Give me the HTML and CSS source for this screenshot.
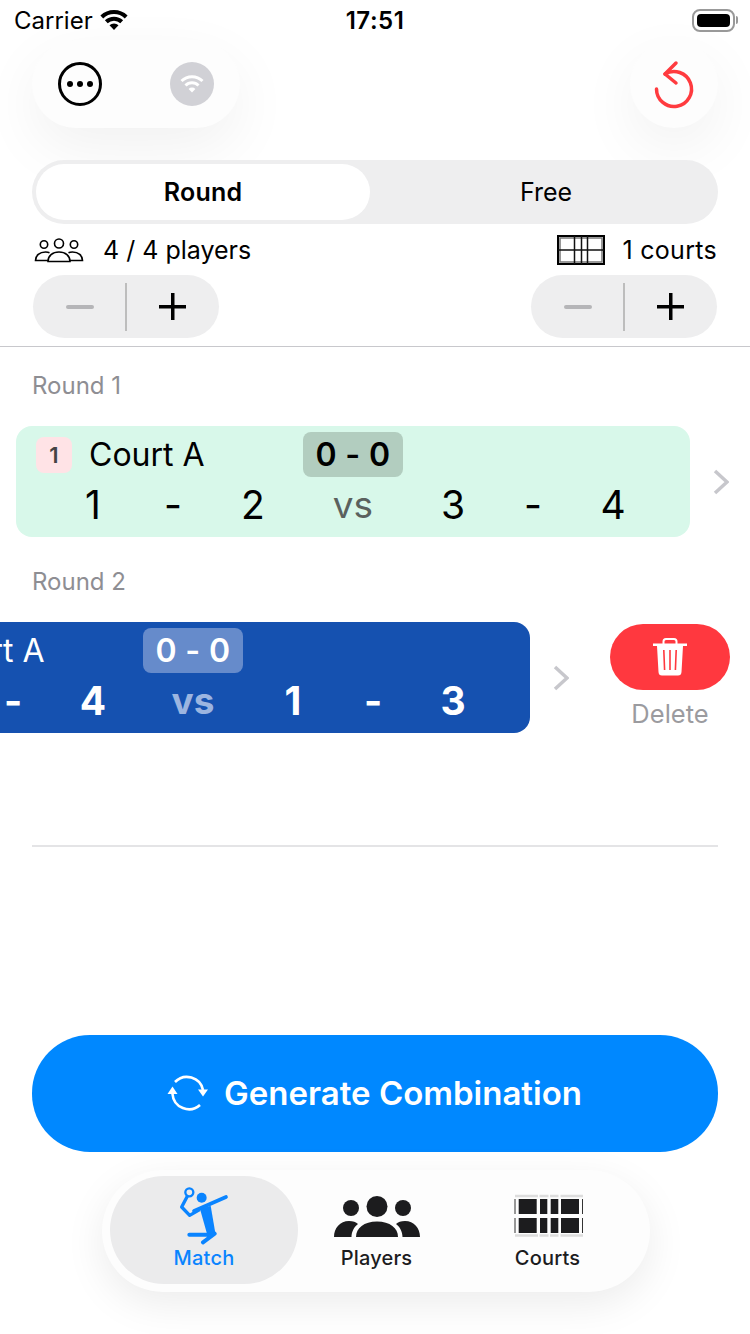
FILE: index.html
```html
<!DOCTYPE html>
<html lang="en">

<head>
    <meta charset="UTF-8">
    <meta name="viewport" content="width=device-width, initial-scale=1.0">
    <title>Match</title>
    <link rel="stylesheet" href="styles.css">
</head>

<body>
    <header class="statusBar">
        <div class="statusLeft">
            <span>Carrier</span>
            <svg width="32" height="22" viewBox="0 0 32 22">
                <path d="M16 21 11.500 16.300a6.500 6.500 0 0 1 9 0Z" fill="#000" />
                <path d="M8.300 12.800a11 11 0 0 1 15.400 0M3.800 8a17.500 17.500 0 0 1 24.400 0" fill="none" stroke="#000" stroke-width="4" />
            </svg>
        </div>
        <div class="statusTime">17:51</div>
        <div class="battery">
            <div class="batteryBody"><div class="batteryFill"></div></div>
            <div class="batteryCap"></div>
        </div>
    </header>

    <div class="topBar">
        <div class="topPill">
            <svg width="46" height="46" viewBox="0 0 46 46">
                <circle cx="23" cy="23" r="20.500" fill="none" stroke="#000" stroke-width="3" />
                <circle cx="13" cy="23" r="3" />
                <circle cx="23" cy="23" r="3" />
                <circle cx="33" cy="23" r="3" />
            </svg>
            <div class="wifiDisc">
                <svg width="26" height="20" viewBox="0 0 26 20">
                    <path d="M13 18.500 9.600 15a4.800 4.800 0 0 1 6.800 0Z" fill="#fff" />
                    <path d="M6.500 11.500a9.200 9.200 0 0 1 13 0M2.500 7a15 15 0 0 1 21 0" fill="none" stroke="#fff" stroke-width="3" />
                </svg>
            </div>
        </div>
        <div class="resetButton">
            <svg width="44" height="52" viewBox="0 0 44 52" fill="none" stroke="#ff3b3f" stroke-width="3.500" stroke-linecap="round" stroke-linejoin="round">
                <path d="M13 16A17.500 17.500 0 1 1 4.500 31" />
                <path d="M24 5 13 16l11 9" />
            </svg>
        </div>
    </div>

    <div class="segment">
        <div class="segmentItem selected">Round</div>
        <div class="segmentItem">Free</div>
    </div>

    <div class="controls">
        <div class="controlGroup">
            <div class="controlInfo playersInfo">
                <svg width="50" height="26" viewBox="0 0 50 26" fill="none" stroke="#000" stroke-width="1.600">
                    <circle cx="10" cy="7.500" r="3.700" />
                    <circle cx="25" cy="6.500" r="4.500" />
                    <circle cx="40" cy="7.500" r="3.700" />
                    <path d="M15 23.500H1.500c0-5 4-8.500 10-8.500 1.500 0 3 .2 4 .7" />
                    <path d="M35 23.500H48.500c0-5-4-8.500-10-8.500-1.500 0-3 .2-4 .7" />
                    <path d="M14 24.500c0-5.500 4.500-9.500 11-9.500s11 4 11 9.500Z" />
                </svg>
                <span>4 / 4 players</span>
            </div>
            <div class="stepper">
                <div class="stepMinus"></div>
                <div class="stepLine"></div>
                <div class="stepPlus"></div>
            </div>
        </div>
        <div class="controlGroup alignEnd">
            <div class="controlInfo">
                <svg width="48" height="30" viewBox="0 0 48 30" fill="none">
                    <rect x="1" y="1" width="46" height="28" stroke="#000" stroke-width="2" />
                    <rect x="3" y="3" width="42" height="24" stroke="#777" stroke-width="1.500" />
                    <path d="M17.500 1v28M24.500 1v28M30.500 1v28M1 15h46" stroke="#111" stroke-width="1.500" />
                </svg>
                <span>1 courts</span>
            </div>
            <div class="stepper">
                <div class="stepMinus"></div>
                <div class="stepLine"></div>
                <div class="stepPlus"></div>
            </div>
        </div>
    </div>

    <main class="rounds">
        <div class="roundTitle">Round 1</div>
        <div class="matchRow">
            <div class="matchCard">
                <div class="cardTop">
                    <div class="courtBadge">1</div>
                    <div class="courtName">Court A</div>
                    <div class="scorePill">0 - 0</div>
                </div>
                <div class="cardPlayers">
                    <span>1</span><span>-</span><span>2</span><span class="versus">vs</span><span>3</span><span>-</span><span>4</span>
                </div>
            </div>
            <svg class="chevron" width="16" height="26" viewBox="0 0 16 26">
                <path d="M2 2 14 13 2 24" fill="none" stroke="#c7c7cc" stroke-width="3.500" />
            </svg>
        </div>

        <div class="roundTitle">Round 2</div>
        <div class="matchRow swiped">
            <div class="matchCard active">
                <div class="cardTop">
                    <div class="courtBadge">2</div>
                    <div class="courtName">Court A</div>
                    <div class="scorePill">0 - 0</div>
                </div>
                <div class="cardPlayers">
                    <span>2</span><span>-</span><span>4</span><span class="versus">vs</span><span>1</span><span>-</span><span>3</span>
                </div>
            </div>
            <svg class="chevron" width="16" height="26" viewBox="0 0 16 26">
                <path d="M2 2 14 13 2 24" fill="none" stroke="#c7c7cc" stroke-width="3.500" />
            </svg>
            <div class="deleteAction">
                <div class="deleteButton">
                    <svg width="36" height="40" viewBox="0 0 36 40" fill="#fff">
                        <path d="M1 6.500h34v2.500H1Z" />
                        <path d="M11.500 7V4.500q0-2.500 2.500-2.500h8q2.500 0 2.500 2.500V7" fill="none" stroke="#fff" stroke-width="2" />
                        <path fill-rule="evenodd" d="M5 9h26l-1.500 26q-.2 3.500-3.500 3.500H10q-3.300 0-3.500-3.500ZM11 13l.8 20h1.600L12.600 13ZM17.200 13v20h1.600V13ZM23.400 13l-.8 20h1.600l.8-20Z" />
                    </svg>
                </div>
                <span>Delete</span>
            </div>
        </div>
    </main>

    <div class="divider"></div>

    <button type="button" class="generateButton">
        <svg width="44" height="40" viewBox="0 0 44 40" fill="none" stroke="#fff" stroke-width="2.600">
            <path d="M9 9A16.500 16.500 0 0 1 37 17" />
            <path d="M6.500 21A16.500 16.500 0 0 0 34 32" />
            <path d="M32 16.500h10l-5 7Z" fill="#fff" stroke="none" />
            <path d="M1.500 21h10l-5-7.500Z" fill="#fff" stroke="none" />
        </svg>
        <span>Generate Combination</span>
    </button>

    <nav class="tabBar">
        <div class="tabItem selected">
            <svg width="60" height="60" viewBox="0 0 180 180">
                <circle cx="46" cy="22" r="12" fill="none" stroke="#0a84ff" stroke-width="7" />
                <circle cx="83" cy="38" r="15" fill="#0a84ff" />
                <path d="M40 34 23 66l24 25 30-17" fill="none" stroke="#0a84ff" stroke-width="10" stroke-linejoin="round" />
                <path d="M60 78 156 36" fill="none" stroke="#0a84ff" stroke-width="11" stroke-linecap="round" />
                <path d="M78 72 110 62 125 150 100 150Z" fill="#0a84ff" />
                <path d="M46 149H100M122 146 87 172" fill="none" stroke="#0a84ff" stroke-width="12" stroke-linecap="round" />
            </svg>
            <span>Match</span>
        </div>
        <div class="tabItem">
            <svg width="88" height="60" viewBox="0 0 88 60" fill="#1c1c1e">
                <circle cx="18" cy="23" r="8" />
                <circle cx="44" cy="21.500" r="10.500" />
                <circle cx="70" cy="23" r="8" />
                <path d="M1 52c0-9 6-16 15-16 4 0 7 1 9 3-4 3-6.500 8-6.500 13Z" />
                <path d="M23 52c0-9 8-15.500 21-15.500S65 43 65 52Z" />
                <path d="M87 52c0-9-6-16-15-16-4 0-7 1-9 3 4 3 6.500 8 6.500 13Z" />
            </svg>
            <span>Players</span>
        </div>
        <div class="tabItem">
            <svg width="70" height="60" viewBox="0 0 70 60">
                <path d="M2 11H25M26.500 11H35.500M37 11H45.500M47.500 11H70M2 50.500H25M26.500 50.500H35.500M37 50.500H45.500M47.500 50.500H70" stroke="#ddd" stroke-width="2.500" />
                <path d="M2 14V29M2 33V48M69.500 14V29M69.500 33V48" stroke="#333" stroke-width="1" />
                <g fill="#1c1c1e">
                    <rect x="5.700" y="14" width="18" height="15" />
                    <rect x="27" y="14" width="7.300" height="15" />
                    <rect x="37.700" y="14" width="7.600" height="15" />
                    <rect x="48" y="14" width="18" height="15" />
                    <rect x="5.700" y="33" width="18" height="15" />
                    <rect x="27" y="33" width="7.300" height="15" />
                    <rect x="37.700" y="33" width="7.600" height="15" />
                    <rect x="48" y="33" width="18" height="15" />
                </g>
            </svg>
            <span>Courts</span>
        </div>
    </nav>
</body>

</html>
```

FILE: styles.css
```css
html,
body {
    height: 100%;
}

body {
    margin: 0;
    width: 750px;
    height: 1334px;
    overflow: hidden;
    font-family: 'Inter', 'Liberation Sans', sans-serif;
    color: #000;
    background-color: #fff;
}

.statusBar {
    display: flex;
    align-items: center;
    justify-content: space-between;
    height: 40px;
    padding: 0 12px 0 14px;
    font-size: 24px;
    box-sizing: border-box;
    position: relative;
}

.statusLeft {
    display: flex;
    align-items: center;
    gap: 5px;
}

.statusTime {
    position: absolute;
    left: 0;
    right: 0;
    text-align: center;
    font-weight: 600;
    letter-spacing: 0.5px;
}

.battery {
    display: flex;
    align-items: center;
    gap: 1px;
}

.batteryBody {
    width: 43px;
    height: 23px;
    padding: 3px;
    border: 2px solid #999;
    border-radius: 8px;
    box-sizing: border-box;
}

.batteryFill {
    height: 100%;
    background-color: #000;
    border-radius: 4px;
}

.batteryCap {
    width: 2px;
    height: 8px;
    background-color: #999;
    border-radius: 0 2px 2px 0;
}

.topBar {
    display: flex;
    justify-content: space-between;
    padding: 0 32px;
}

.topPill {
    display: flex;
    align-items: center;
    gap: 67px;
    height: 88px;
    width: 208px;
    padding-left: 25px;
    box-sizing: border-box;
    background-color: #fdfdfd;
    border-radius: 44px;
    box-shadow: 0 20px 60px rgba(0, 0, 0, 0.06);
}

.wifiDisc {
    display: flex;
    align-items: center;
    justify-content: center;
    width: 44px;
    height: 44px;
    background-color: #d1d1d6;
    border-radius: 50%;
}

.resetButton {
    display: flex;
    align-items: center;
    justify-content: center;
    width: 88px;
    height: 88px;
    background-color: #fdfdfd;
    border-radius: 50%;
    box-shadow: 0 20px 60px rgba(0, 0, 0, 0.06);
}

.segment {
    display: flex;
    position: relative;
    height: 64px;
    margin: 32px 32px 0;
    padding: 4px;
    box-sizing: border-box;
    background-color: #eeeeef;
    border-radius: 32px;
}

.segmentItem {
    display: flex;
    align-items: center;
    justify-content: center;
    flex: 1;
    padding-left: 8px;
    font-size: 25px;
    font-weight: 400;
    border-radius: 28px;
}

.segmentItem.selected {
    flex: none;
    width: 334px;
    padding-left: 0;
    letter-spacing: 0.2px;
    font-weight: 600;
    background-color: #fff;
}

.controls {
    display: flex;
    justify-content: space-between;
    margin: 8px 33px 0;
}

.controlGroup {
    display: flex;
    flex-direction: column;
    align-items: flex-start;
    gap: 7px;
}

.controlGroup.alignEnd {
    align-items: flex-end;
}

.controlInfo {
    display: flex;
    align-items: center;
    gap: 17px;
    height: 36px;
    font-size: 25px;
    letter-spacing: 0.3px;
}

.playersInfo {
    gap: 19px;
    margin-left: 1px;
    letter-spacing: 0;
}

.stepper {
    display: flex;
    align-items: center;
    width: 186px;
    height: 63px;
    padding-left: 33px;
    box-sizing: border-box;
    background-color: #eeeeef;
    border-radius: 32px;
}

.stepMinus {
    width: 28px;
    height: 4px;
    margin-right: 31px;
    background-color: #b5b5b8;
    border-radius: 2px;
}

.stepLine {
    width: 2px;
    height: 48px;
    background-color: #bdbdbd;
}

.stepPlus {
    width: 27px;
    height: 27px;
    margin-left: 32px;
    background:
        linear-gradient(#000, #000) center / 100% 3.500px no-repeat,
        linear-gradient(#000, #000) center / 3.500px 100% no-repeat;
    border-radius: 2px;
}

.rounds {
    margin-top: 8px;
    border-top: 1px solid #c8c8cc;
    overflow: hidden;
    height: 498px;
}

.roundTitle {
    margin: 25px 0 26px 32px;
    height: 28px;
    line-height: 28px;
    font-size: 24px;
    color: #8e8e93;
}

.matchRow + .roundTitle {
    margin-top: 31px;
}

.matchRow {
    display: flex;
    align-items: center;
    gap: 23px;
    position: relative;
    margin-left: 16px;
}

.matchRow.swiped {
    transform: translateX(-160px);
}

.matchCard {
    flex: none;
    width: 674px;
    height: 111px;
    box-sizing: border-box;
    padding: 6px 37px 0;
    background-color: #d8f8ea;
    border-radius: 16px;
}

.matchCard.active {
    color: #fff;
    background-color: #1551b0;
}

.cardTop {
    display: grid;
    grid-template-columns: 53px 214px 100px;
    align-items: center;
    height: 45px;
    margin-left: -17px;
}

.courtBadge {
    display: flex;
    align-items: center;
    justify-content: center;
    width: 36px;
    height: 36px;
    font-size: 22px;
    font-weight: 600;
    color: #444;
    background-color: #ffe3e6;
    border-radius: 8px;
}

.courtName {
    font-size: 32px;
}

.scorePill {
    height: 45px;
    line-height: 45px;
    text-align: center;
    font-size: 32px;
    font-weight: 600;
    letter-spacing: 0.4px;
    background-color: #b2cdbf;
    border-radius: 8px;
}

.active .scorePill {
    background-color: #668bcb;
}

.cardPlayers {
    display: grid;
    grid-template-columns: 80px 80px 80px 120px 80px 80px 80px;
    height: 56px;
    line-height: 56px;
    text-align: center;
    font-size: 39px;
}

.active .cardPlayers {
    font-weight: 700;
}

.versus {
    font-size: 37px;
    color: #5a615e;
}

.active .versus {
    color: #9cb5e0;
}

.chevron {
    flex: none;
}

.deleteAction {
    position: absolute;
    left: 754px;
    top: 2px;
    display: flex;
    flex-direction: column;
    align-items: center;
    width: 120px;
    gap: 8px;
    font-size: 25.500px;
    color: #9b9b9f;
}

.deleteButton {
    display: flex;
    align-items: center;
    justify-content: center;
    width: 120px;
    height: 66px;
    background-color: #ff383f;
    border-radius: 33px;
}

.divider {
    height: 2px;
    margin: 0 32px;
    background-color: #e4e4e6;
}

.generateButton {
    display: flex;
    align-items: center;
    justify-content: center;
    gap: 14px;
    width: 686px;
    height: 117px;
    margin: 188px 32px 0;
    padding: 0 2px 2px 0;
    border: none;
    border-radius: 58px;
    font-family: inherit;
    font-size: 33px;
    font-weight: 600;
    color: #fff;
    background-color: #0088ff;
}

.tabBar {
    display: flex;
    align-items: flex-start;
    width: 548px;
    height: 122px;
    margin: 18px 0 0 102px;
    padding: 6px 8px 0;
    box-sizing: border-box;
    background-color: #fdfdfd;
    border-radius: 61px;
    box-shadow: 0 12px 40px rgba(0, 0, 0, 0.08);
}

.tabItem {
    display: flex;
    flex-direction: column;
    align-items: center;
    width: 171px;
    height: 108px;
    padding-top: 9px;
    box-sizing: border-box;
    font-size: 20px;
    font-weight: 500;
    letter-spacing: 0.2px;
    color: #1c1c1e;
    border-radius: 54px;
}

.tabItem span {
    margin-top: 1px;
}

.tabItem.selected {
    width: 188px;
    margin-right: -7px;
    color: #0a84ff;
    background-color: #ebebec;
}
```
